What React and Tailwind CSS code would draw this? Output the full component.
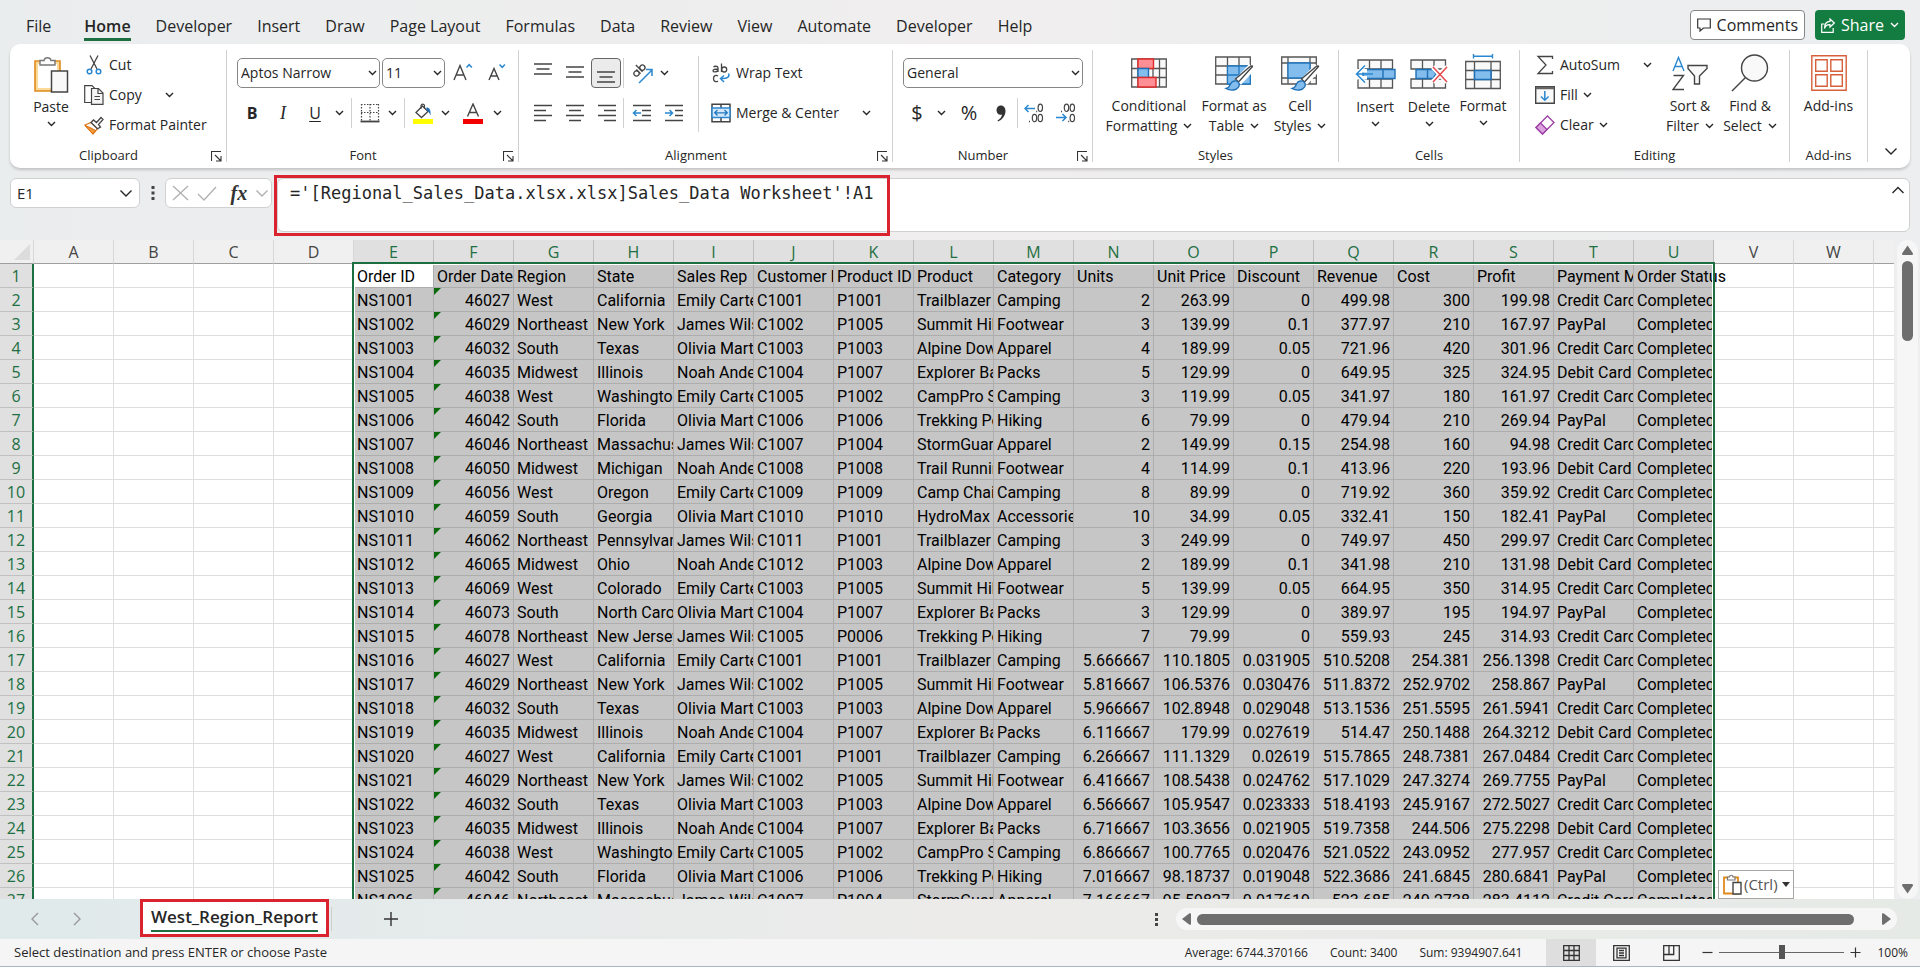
import clsx from 'clsx';

const tabs = [
  'File',
  'Home',
  'Developer',
  'Insert',
  'Draw',
  'Page Layout',
  'Formulas',
  'Data',
  'Review',
  'View',
  'Automate',
  'Developer',
  'Help',
];

const columns = 'ABCDEFGHIJKLMNOPQRSTUVW'.split('');
const FIRST = 4; // column E
const LAST = 20; // column U

const headings = [
  'Order ID', 'Order Date', 'Region', 'State', 'Sales Rep', 'Customer ID', 'Product ID', 'Product', 'Category',
  'Units', 'Unit Price', 'Discount', 'Revenue', 'Cost', 'Profit', 'Payment Method', 'Order Status',
];

const EC = 'Emily Carter';
const JW = 'James Wilson';
const OM = 'Olivia Martinez';
const NA = 'Noah Anderson';

const orders = [
  ['46027', 'West', 'California', EC, 'C1001', 'P1001', 'Trailblazer Tent', 'Camping', '2', '263.99', '0', '499.98', '300', '199.98', 'Credit Card'],
  ['46029', 'Northeast', 'New York', JW, 'C1002', 'P1005', 'Summit Hiking Boots', 'Footwear', '3', '139.99', '0.1', '377.97', '210', '167.97', 'PayPal'],
  ['46032', 'South', 'Texas', OM, 'C1003', 'P1003', 'Alpine Down Jacket', 'Apparel', '4', '189.99', '0.05', '721.96', '420', '301.96', 'Credit Card'],
  ['46035', 'Midwest', 'Illinois', NA, 'C1004', 'P1007', 'Explorer Backpack', 'Packs', '5', '129.99', '0', '649.95', '325', '324.95', 'Debit Card'],
  ['46038', 'West', 'Washington', EC, 'C1005', 'P1002', 'CampPro Stove', 'Camping', '3', '119.99', '0.05', '341.97', '180', '161.97', 'Credit Card'],
  ['46042', 'South', 'Florida', OM, 'C1006', 'P1006', 'Trekking Poles', 'Hiking', '6', '79.99', '0', '479.94', '210', '269.94', 'PayPal'],
  ['46046', 'Northeast', 'Massachusetts', JW, 'C1007', 'P1004', 'StormGuard Jacket', 'Apparel', '2', '149.99', '0.15', '254.98', '160', '94.98', 'Credit Card'],
  ['46050', 'Midwest', 'Michigan', NA, 'C1008', 'P1008', 'Trail Running Shoes', 'Footwear', '4', '114.99', '0.1', '413.96', '220', '193.96', 'Debit Card'],
  ['46056', 'West', 'Oregon', EC, 'C1009', 'P1009', 'Camp Chair', 'Camping', '8', '89.99', '0', '719.92', '360', '359.92', 'Credit Card'],
  ['46059', 'South', 'Georgia', OM, 'C1010', 'P1010', 'HydroMax Water Bottle', 'Accessories', '10', '34.99', '0.05', '332.41', '150', '182.41', 'PayPal'],
  ['46062', 'Northeast', 'Pennsylvania', JW, 'C1011', 'P1001', 'Trailblazer Tent', 'Camping', '3', '249.99', '0', '749.97', '450', '299.97', 'Credit Card'],
  ['46065', 'Midwest', 'Ohio', NA, 'C1012', 'P1003', 'Alpine Down Jacket', 'Apparel', '2', '189.99', '0.1', '341.98', '210', '131.98', 'Debit Card'],
  ['46069', 'West', 'Colorado', EC, 'C1003', 'P1005', 'Summit Hiking Boots', 'Footwear', '5', '139.99', '0.05', '664.95', '350', '314.95', 'Credit Card'],
  ['46073', 'South', 'North Carolina', OM, 'C1004', 'P1007', 'Explorer Backpack', 'Packs', '3', '129.99', '0', '389.97', '195', '194.97', 'PayPal'],
  ['46078', 'Northeast', 'New Jersey', JW, 'C1005', 'P0006', 'Trekking Poles', 'Hiking', '7', '79.99', '0', '559.93', '245', '314.93', 'Credit Card'],
  ['46027', 'West', 'California', EC, 'C1001', 'P1001', 'Trailblazer Tent', 'Camping', '5.666667', '110.1805', '0.031905', '510.5208', '254.381', '256.1398', 'Credit Card'],
  ['46029', 'Northeast', 'New York', JW, 'C1002', 'P1005', 'Summit Hiking Boots', 'Footwear', '5.816667', '106.5376', '0.030476', '511.8372', '252.9702', '258.867', 'PayPal'],
  ['46032', 'South', 'Texas', OM, 'C1003', 'P1003', 'Alpine Down Jacket', 'Apparel', '5.966667', '102.8948', '0.029048', '513.1536', '251.5595', '261.5941', 'Credit Card'],
  ['46035', 'Midwest', 'Illinois', NA, 'C1004', 'P1007', 'Explorer Backpack', 'Packs', '6.116667', '179.99', '0.027619', '514.47', '250.1488', '264.3212', 'Debit Card'],
  ['46027', 'West', 'California', EC, 'C1001', 'P1001', 'Trailblazer Tent', 'Camping', '6.266667', '111.1329', '0.02619', '515.7865', '248.7381', '267.0484', 'Credit Card'],
  ['46029', 'Northeast', 'New York', JW, 'C1002', 'P1005', 'Summit Hiking Boots', 'Footwear', '6.416667', '108.5438', '0.024762', '517.1029', '247.3274', '269.7755', 'PayPal'],
  ['46032', 'South', 'Texas', OM, 'C1003', 'P1003', 'Alpine Down Jacket', 'Apparel', '6.566667', '105.9547', '0.023333', '518.4193', '245.9167', '272.5027', 'Credit Card'],
  ['46035', 'Midwest', 'Illinois', NA, 'C1004', 'P1007', 'Explorer Backpack', 'Packs', '6.716667', '103.3656', '0.021905', '519.7358', '244.506', '275.2298', 'Debit Card'],
  ['46038', 'West', 'Washington', EC, 'C1005', 'P1002', 'CampPro Stove', 'Camping', '6.866667', '100.7765', '0.020476', '521.0522', '243.0952', '277.957', 'Credit Card'],
  ['46042', 'South', 'Florida', OM, 'C1006', 'P1006', 'Trekking Poles', 'Hiking', '7.016667', '98.18737', '0.019048', '522.3686', '241.6845', '280.6841', 'PayPal'],
  ['46046', 'Northeast', 'Massachusetts', JW, 'C1007', 'P1004', 'StormGuard Jacket', 'Apparel', '7.166667', '95.59827', '0.017619', '523.685', '240.2738', '283.4112', 'Credit Card'],
];

const rows = [headings, ...orders.map((order, i) => [`NS${1001 + i}`, ...order, 'Completed'])];

/* ---------- small shared pieces ---------- */

function Chevron({ className }) {
  return (
    <svg width="9" height="6" viewBox="0 0 9 6" fill="none" stroke="currentColor" strokeWidth="1.4" className={clsx('shrink-0', className)}>
      <path d="M1 1l3.5 3.5L8 1" />
    </svg>
  );
}

function WideChevron({ d, className }) {
  return (
    <svg width="14" height="14" viewBox="0 0 14 14" fill="none" stroke="currentColor" strokeWidth="1.4" className={clsx('shrink-0', className)}>
      <path d={d} />
    </svg>
  );
}

function Separator({ className }) {
  return <span className={clsx('w-px shrink-0 self-stretch bg-[#d1d1d1]', className)} />;
}

function IconButton({ label, className, children }) {
  return (
    <button type="button" aria-label={label} className={clsx('flex h-[30px] shrink-0 items-center justify-center rounded', className)}>
      {children}
    </button>
  );
}

function Drop({ label, className = 'w-4' }) {
  return (
    <IconButton label={label} className={className}>
      <Chevron />
    </IconButton>
  );
}

function SelectBox({ label, value, className }) {
  return (
    <span className={clsx('relative block h-[30px]', className)}>
      <select
        aria-label={label}
        defaultValue={value}
        className="h-full w-full appearance-none rounded-[5px] border border-[#868686] bg-white pl-[3px] text-sm outline-none"
      >
        <option>{value}</option>
      </select>
      <Chevron className="pointer-events-none absolute right-[3px] top-3" />
    </span>
  );
}

function Group({ title, launcher = false, className, children }) {
  return (
    <section aria-label={title} className={clsx('flex shrink-0', className)}>
      <div className="flex min-w-0 flex-1 flex-col pt-1.5">
        <div className="flex h-[90px]">{children}</div>
        <div className="mt-1 flex h-6 items-center px-1 text-[13px]">
          <span className={clsx('flex-1 text-center', launcher && 'pr-2')}>{title}</span>
          {launcher && (
            <button type="button" aria-label={`${title} settings`}>
              <svg width="11" height="11" viewBox="0 0 11 11" fill="none" stroke="#333" strokeWidth="1.1">
                <path d="M0.5 10V0.5H10M4 4l5.5 5.5M10 5v5H5" />
              </svg>
            </button>
          )}
        </div>
      </div>
      <Separator className="my-1.5" />
    </section>
  );
}

function BigButton({ icon, lines, dropBelow = false, drop = true, className }) {
  return (
    <button type="button" className={clsx('flex shrink-0 flex-col items-center self-start text-sm leading-5', className)}>
      <span className="flex h-[46px] items-center justify-center">{icon}</span>
      {lines.map((line, i) => (
        <span key={line} className="flex items-center gap-1.5 whitespace-nowrap">
          {line}
          {drop && !dropBelow && i === lines.length - 1 && <Chevron />}
        </span>
      ))}
      {dropBelow && <Chevron className="mt-1" />}
    </button>
  );
}

/* ---------- ribbon icons ---------- */

function PasteIcon() {
  return (
    <svg width="36" height="39" viewBox="0 0 36 39" fill="none">
      <path d="M2 6h25v30H2z" fill="#fbd998" stroke="#e08a1e" strokeWidth="1.6" />
      <path d="M5 9h19v24H5z" fill="#fff" />
      <path d="M7 10V5.5h4a3.600 3.600 0 0 1 7 0h4V10z" fill="#fff" stroke="#777" strokeWidth="1.4" />
      <path d="M18.5 16h16v21h-16z" fill="#f8f8f8" stroke="#444" strokeWidth="1.5" />
    </svg>
  );
}

function CutIcon() {
  return (
    <svg width="20" height="20" viewBox="0 0 20 20" fill="none">
      <path d="M6 0.5l7 13.5M14 0.5L7 14" stroke="#444" strokeWidth="1.3" />
      <circle cx="5.5" cy="16.5" r="2.3" stroke="#2b88d0" strokeWidth="1.5" />
      <circle cx="14.5" cy="16.5" r="2.3" stroke="#2b88d0" strokeWidth="1.5" />
    </svg>
  );
}

function CopyIcon() {
  return (
    <svg width="20" height="20" viewBox="0 0 20 20" fill="none" stroke="#444" strokeWidth="1.2">
      <path d="M7.5 17.5H0.7V0.7H8l3 3" fill="#fff" />
      <path d="M7.5 3.5h7l4.5 4.5v11.3H7.5z" fill="#f4f4f4" />
      <path d="M14 3.5V8.5h5M10.5 11.5h5.5M10.5 14.5h5.5" />
    </svg>
  );
}

function PainterIcon() {
  return (
    <svg width="20" height="19" viewBox="0 0 20 19" fill="none">
      <path d="M1 9l6-2.5 6.5 6L9 18z" fill="#fff" stroke="#e07b1a" strokeWidth="1.3" />
      <path d="M1 9.5l5 2 5.5 3L9 18z" fill="#f39a3b" stroke="#d9700f" />
      <path d="M7 6.5L9.5 4l3 2.5L17 1.5l2 2-4.5 5 2 2.5-3 1.7z" fill="#fff" stroke="#444" strokeWidth="1.3" />
    </svg>
  );
}

function FontSizeIcon({ grow }) {
  return (
    <svg width={grow ? 20 : 18} height="20" viewBox={grow ? '0 0 20 20' : '0 0 18 20'} fill="none">
      <path d={grow ? 'M1 17L7 2.5 13 17M3 12h8' : 'M1 17L6 5.500 11 17M2.800 13h6.500'} stroke="#444" strokeWidth="1.4" />
      <path d={grow ? 'M13.5 4.500l2.700-2.800 2.700 2.800' : 'M11.5 1.500l2.700 2.800 2.700-2.800'} stroke="#2b88d0" strokeWidth="1.5" />
    </svg>
  );
}

function BordersIcon() {
  return (
    <svg width="20" height="20" viewBox="0 0 20 20" fill="none" stroke="#444">
      <path d="M1 1.5h18M1 9.5h18M1.5 1v17M10 1v17M18.5 1v17" strokeDasharray="1.5 1.5" strokeWidth="1.2" />
      <path d="M0.5 18.5h19" strokeWidth="1.8" />
    </svg>
  );
}

function FillColorIcon() {
  return (
    <svg width="20" height="21" viewBox="0 0 20 21" fill="none">
      <path d="M3 9.5L9.5 3l5.5 5.5-6.5 6z" fill="#fff" stroke="#444" strokeWidth="1.3" />
      <path d="M8 6V2.5a1.800 1.800 0 0 1 3.500 0V6" stroke="#444" strokeWidth="1.1" />
      <path d="M13.5 4.5c3 0 4.500 2.500 4 8-1-2.500-2-4-4-5z" fill="#1f6fb5" />
      <path d="M0 16h20v5H0z" fill="#ffff00" />
    </svg>
  );
}

function FontColorIcon() {
  return (
    <svg width="20" height="21" viewBox="0 0 20 21" fill="none">
      <path d="M4.5 13.5L10 1l5.5 12.5M6.5 9.5h7" stroke="#444" strokeWidth="1.4" />
      <path d="M0 16h20v5H0z" fill="#f20000" />
    </svg>
  );
}

function Lines({ d, children }) {
  return (
    <svg width="20" height="20" viewBox="0 0 20 20" fill="none" stroke="#444" strokeWidth="1.5">
      <path d={d} />
      {children}
    </svg>
  );
}

function OrientationIcon() {
  return (
    <svg width="21" height="21" viewBox="0 0 21 21" fill="none" strokeWidth="1.3">
      <g stroke="#444" transform="rotate(-45 7 8)">
        <circle cx="3.5" cy="8" r="2.6" />
        <path d="M6.3 5v6M9 1.5V11" />
        <circle cx="11.8" cy="8" r="2.6" />
      </g>
      <path d="M7 20L20 7M14 6.5h6V13" stroke="#2b88d0" strokeWidth="1.5" />
    </svg>
  );
}

function WrapIcon() {
  return (
    <svg width="20" height="20" viewBox="0 0 20 20" fill="none" stroke="#444" strokeWidth="1.3">
      <path d="M2.5 4c1-1 4.500-1.300 4.500 1v4M7 6C4 6 2 6.200 2 7.700S5.500 9.500 7 7.500" />
      <path d="M10.5 0.5V9" />
      <circle cx="13.2" cy="6.5" r="2.5" />
      <path d="M7 13c-2-1.500-4.500-.5-4.500 2.500s2.500 4 4.500 2.500" />
      <path d="M17.5 10.5c1.500 3-1 5.500-7.500 5M13 12.5l-3.500 3 3.500 3.500" stroke="#2b88d0" strokeWidth="1.5" />
    </svg>
  );
}

function MergeIcon() {
  return (
    <svg width="20" height="20" viewBox="0 0 20 20" fill="none">
      <path d="M1 1.2h18v17.6H1zM10 1v4M10 15v4" stroke="#444" strokeWidth="1.5" />
      <path d="M1 5h18v9.5H1z" fill="#d4e8f9" stroke="#2b88d0" strokeWidth="1.5" />
      <path d="M4 9.8h12M6.5 7L3.7 9.8l2.8 2.7M13.5 7l2.8 2.8-2.8 2.7" stroke="#1f78c1" strokeWidth="1.3" />
    </svg>
  );
}

function DecimalIcon({ increase }) {
  return (
    <svg width="20" height="20" viewBox="0 0 20 20" fill="none" stroke="#444" strokeWidth="1.2">
      {increase ? (
        <>
          <path d="M11 5.5H1M4.5 2L1 5.5 4.5 9" stroke="#2b88d0" strokeWidth="1.5" />
          <ellipse cx="16.3" cy="4.8" rx="2.2" ry="3.7" />
          <ellipse cx="10.5" cy="15" rx="2.2" ry="3.7" />
          <ellipse cx="16.3" cy="15" rx="2.2" ry="3.7" />
          <path d="M12.2 8.500h1M5 18.500h1" strokeWidth="1.5" />
        </>
      ) : (
        <>
          <ellipse cx="10.5" cy="4.8" rx="2.2" ry="3.7" />
          <ellipse cx="16.3" cy="4.8" rx="2.2" ry="3.7" />
          <ellipse cx="16.3" cy="15" rx="2.2" ry="3.7" />
          <path d="M5 8.500h1M12.200 18.500h1" strokeWidth="1.5" />
          <path d="M0 14.5h10M6.5 11l3.5 3.5L6.5 18" stroke="#2b88d0" strokeWidth="1.5" />
        </>
      )}
    </svg>
  );
}

function ConditionalIcon() {
  return (
    <svg width="36" height="30" viewBox="0 0 36 30" fill="none">
      <path d="M0.7 1h34.6v28H0.7zM0.7 10.5h34.6M0.7 19.5h34.6M7 1v28M22 1v28M28.5 1v28" fill="#f9f9f9" stroke="#555" strokeWidth="1.3" />
      <path d="M7 1h15.5v9.5H7z" fill="#ff8f94" stroke="#e02b2b" strokeWidth="1.4" />
      <path d="M7 10.5h10.5v9H7z" fill="#83bdee" stroke="#1f6fb5" strokeWidth="1.4" />
      <path d="M7 19.5h18V29H7z" fill="#ff8f94" stroke="#e02b2b" strokeWidth="1.4" />
    </svg>
  );
}

function Brush() {
  return (
    <>
      <path d="M37 11L23 26" stroke="#fff" strokeWidth="8" />
      <path d="M37.5 10.500L23.500 26l-3-3L34.500 11c1.800-1.400 3.500-1.500 3-.5z" fill="#fff" stroke="#444" strokeWidth="1.3" />
      <path d="M11 32.5c3-.5 3.500-2 4.500-4.500 1.500-3.500 6-4 8-1.500 2 3-.5 7-5 7.500-3 .3-5.500-.3-7.500-1.500z" fill="#83bdee" stroke="#1f6fb5" strokeWidth="1.3" />
    </>
  );
}

function FormatTableIcon() {
  return (
    <svg width="39" height="36" viewBox="0 -1 39 36" fill="none">
      <path d="M0.7 1h34.6v27H0.7zM0.7 10h34.6M0.7 19h34.6M12.5 1v27M24 1v27" fill="#f9f9f9" stroke="#555" strokeWidth="1.3" />
      <path d="M12.5 10h22.8v18H12.5zM12.5 19h22.8M24 10v18" fill="#83bdee" stroke="#1f78c1" strokeWidth="1.3" />
      <Brush />
    </svg>
  );
}

function CellStylesIcon() {
  return (
    <svg width="39" height="36" viewBox="0 -1 39 36" fill="none">
      <path d="M0.7 1h34.6v27H0.7zM0.7 7h34.6M0.7 22h34.6M7 1v27M29 1v27" fill="#f9f9f9" stroke="#555" strokeWidth="1.3" />
      <path d="M7 7h22v15H7z" fill="#83bdee" stroke="#1f78c1" strokeWidth="1.3" />
      <Brush />
    </svg>
  );
}

function InsertCellsIcon() {
  return (
    <svg width="41" height="30" viewBox="0 0 41 30" fill="none">
      <path d="M3 1h34.5v9H3zM3 20h34.5v9H3zM14.5 1v9M26 1v9M14.5 20v9M26 20v9" fill="#f9f9f9" stroke="#555" strokeWidth="1.3" />
      <path d="M17 15H1.5M10 6.5L1.5 15l8.5 8.5" stroke="#fff" strokeWidth="4" />
      <path d="M8 10.5h32v9H8zM28 10.5v9" fill="#83bdee" stroke="#1f6fb5" strokeWidth="1.4" />
      <path d="M0 10h12v3.500H0zM0 17h12v3.500H0z" fill="#fff" />
      <path d="M18 15H1.5M10 6.5L1.5 15l8.500 8.500" stroke="#2b88d0" strokeWidth="1.5" />
    </svg>
  );
}

function DeleteCellsIcon() {
  return (
    <svg width="38" height="30" viewBox="0 0 38 30" fill="none">
      <path d="M1 1h34.5v9H1zM1 20h34.5v9H1zM12.5 1v9M24 1v9M12.5 20v9M24 20v9" fill="#f9f9f9" stroke="#555" strokeWidth="1.3" />
      <path d="M6 10.5h17l3 4.500-3 4.500H6zM17.500 10.500v9" fill="#83bdee" stroke="#1f6fb5" strokeWidth="1.4" />
      <path d="M23 8l14 15M37 8L23 23" stroke="#fff" strokeWidth="5" />
      <path d="M23 8l14 15M37 8L23 23" stroke="#e8484a" strokeWidth="1.5" />
    </svg>
  );
}

function FormatCellsIcon() {
  return (
    <svg width="36" height="38" viewBox="0 0 36 38" fill="none">
      <path d="M8.5 0v4.500M27.500 0v4.500M8.500 2.300h19" stroke="#2b88d0" strokeWidth="1.4" />
      <path d="M0.7 7.5h34.600v27H0.700zM0.700 16.500h34.600M0.700 25.500h34.600M9.500 7.500v27M26 7.500v27" fill="#f9f9f9" stroke="#555" strokeWidth="1.3" />
      <path d="M9.5 16.500H26v9H9.500z" fill="#83bdee" stroke="#1f6fb5" strokeWidth="1.5" />
    </svg>
  );
}

function SumIcon() {
  return (
    <svg width="20" height="20" viewBox="0 0 20 20" fill="none" stroke="#444" strokeWidth="1.3">
      <path d="M17.5 4V1.5H3L11 10l-8 8.5h14.500V16" />
    </svg>
  );
}

function FillIcon() {
  return (
    <svg width="20" height="18" viewBox="0 0 20 18" fill="none">
      <path d="M0.7 0.7h18.600v16.600H0.700z" fill="#f9f9f9" stroke="#444" strokeWidth="1.4" />
      <path d="M0.7 2h18.600" stroke="#666" strokeWidth="2.5" />
      <path d="M9.8 5v9M6 10.5l3.800 3.800 3.800-3.800" stroke="#2b88d0" strokeWidth="1.5" />
    </svg>
  );
}

function EraserIcon() {
  return (
    <svg width="20" height="20" viewBox="0 0 20 20" fill="none" stroke="#9b3fa5" strokeWidth="1.3">
      <path d="M12.5 1L19 7.500 7.500 19 1 12.500z" fill="#fff" />
      <path d="M5.5 8L12 14.500 7.500 19 1 12.500z" fill="#dba2df" />
    </svg>
  );
}

function SortIcon() {
  return (
    <svg width="36" height="35" viewBox="0 0 36 35" fill="none">
      <path d="M1 15L6.5 1.5 12 15M3 10.5h7" stroke="#2b88d0" strokeWidth="1.4" />
      <path d="M1.5 19.5h10L1 33.5h11" stroke="#444" strokeWidth="1.4" />
      <path d="M16 9.5h19v3L27.500 20v8h-5v-8L16 12.500z" fill="#f9f9f9" stroke="#444" strokeWidth="1.4" />
    </svg>
  );
}

function FindIcon() {
  return (
    <svg width="38" height="38" viewBox="0 0 38 38" fill="none" stroke="#444" strokeWidth="1.4">
      <circle cx="23.5" cy="14" r="13" fill="#f9f9f9" />
      <path d="M14.5 23.5L1 37" />
    </svg>
  );
}

function AddInsIcon() {
  return (
    <svg width="36" height="36" viewBox="0 0 36 36" fill="none" stroke="#d5603a" strokeWidth="1.4">
      <path d="M0.8 0.8h34.400v34.400H0.800z" />
      <path d="M4.7 4.7h11.500v11.500H4.700zM19.800 4.700h11.500v11.500H19.800zM4.700 19.800h11.500v11.500H4.700zM19.800 19.800h11.500v11.500H19.800z" />
    </svg>
  );
}

/* ---------- page sections ---------- */

function TabBar() {
  return (
    <header className="flex h-11 shrink-0 items-start justify-between pl-[26px] pr-[15px]">
      <nav aria-label="Ribbon tabs" className="mt-3.5 flex gap-[25px] text-base">
        {tabs.map((tab, i) => (
          <button
            key={i}
            type="button"
            className={clsx(
              'border-b-[3px] leading-6',
              tab === 'File' && 'mr-2',
              tab === 'Home' ? 'border-[#1d6f42] font-semibold' : 'border-transparent',
            )}
          >
            {tab}
          </button>
        ))}
      </nav>
      <div className="mt-2.5 flex gap-2.5 text-base">
        <button type="button" className="flex h-[30px] items-center gap-1.5 rounded border border-[#868686] bg-white px-1.5">
          <svg width="14" height="14" viewBox="0 0 14 14" fill="none" stroke="#333" strokeWidth="1.2">
            <path d="M0.7 1h12.600v9H6.500L3 13v-3H0.700z" />
          </svg>
          Comments
        </button>
        <button type="button" className="flex h-[30px] items-center gap-1.5 rounded bg-[#127c41] px-1.5 text-white">
          <svg width="14" height="15" viewBox="0 0 14 15" fill="none" stroke="#fff" strokeWidth="1.2">
            <path d="M3.5 6H0.700v8.300h11.500V10M9 1l4.300 4L9 9V6.700C6 6.500 4.300 8 3.500 10.500 3.500 6.500 5.500 3.600 9 3.400z" />
          </svg>
          Share
          <Chevron />
        </button>
      </div>
    </header>
  );
}

function Ribbon() {
  return (
    <div className="mx-2.5 flex h-[124px] shrink-0 rounded-[10px] bg-white shadow-[0_2px_3px_rgba(0,0,0,0.18)]">
      <Group title="Clipboard" launcher className="w-[217px]">
        <BigButton icon={<PasteIcon />} lines={['Paste']} dropBelow className="ml-4 w-[50px] pt-px" />
        <div className="ml-2 flex flex-col text-sm">
          <button type="button" className="flex h-8 items-center gap-[5px]">
            <CutIcon />
            Cut
          </button>
          <div className="flex h-8 items-center">
            <button type="button" className="flex items-center gap-[5px]">
              <CopyIcon />
              Copy
            </button>
            <Drop label="Copy options" className="ml-5 w-4" />
          </div>
          <button type="button" className="flex h-8 items-center gap-[5px] whitespace-nowrap">
            <PainterIcon />
            Format Painter
          </button>
        </div>
      </Group>

      <Group title="Font" launcher className="w-[292px]">
        <div className="ml-2.5 flex flex-col gap-2.5 pt-2">
          <div className="flex gap-0.5">
            <SelectBox label="Font name" value="Aptos Narrow" className="w-[143px]" />
            <SelectBox label="Font size" value="11" className="w-[63px]" />
            <IconButton label="Increase font size" className="w-8">
              <FontSizeIcon grow />
            </IconButton>
            <IconButton label="Decrease font size" className="w-8">
              <FontSizeIcon />
            </IconButton>
          </div>
          <div className="flex">
            <IconButton label="Bold" className="w-[30px]">
              <b className="text-base">B</b>
            </IconButton>
            <IconButton label="Italic" className="w-8">
              <i className="font-['Liberation_Serif',serif] text-lg">I</i>
            </IconButton>
            <IconButton label="Underline" className="w-8">
              <u className="text-base underline-offset-2">U</u>
            </IconButton>
            <Drop label="Underline options" />
            <Separator className="mx-1" />
            <IconButton label="Borders" className="w-7">
              <BordersIcon />
            </IconButton>
            <Drop label="Border options" />
            <Separator className="mx-1" />
            <IconButton label="Fill color" className="w-7">
              <FillColorIcon />
            </IconButton>
            <Drop label="Fill color options" />
            <IconButton label="Font color" className="ml-1 w-8">
              <FontColorIcon />
            </IconButton>
            <Drop label="Font color options" />
          </div>
        </div>
      </Group>

      <Group title="Alignment" launcher className="w-[374px]">
        <div className="ml-2 flex flex-col gap-2.5 pt-2">
          <div className="flex">
            <IconButton label="Top align" className="w-8">
              <Lines d="M1 1h18M3.500 6h13M1 11h18" />
            </IconButton>
            <IconButton label="Middle align" className="w-8">
              <Lines d="M1 4h18M3.500 9h13M1 14h18" />
            </IconButton>
            <IconButton label="Bottom align" className="w-[30px] border border-[#666] bg-[#ebebeb]">
              <Lines d="M1 9h18M3.500 14h13M1 19h18" />
            </IconButton>
            <Separator className="ml-0.5 mr-1" />
            <IconButton label="Orientation" className="w-7">
              <OrientationIcon />
            </IconButton>
            <Drop label="Orientation options" />
          </div>
          <div className="flex">
            <IconButton label="Align left" className="w-8">
              <Lines d="M1 2.500h18M1 7.500h12M1 12.500h18M1 17.500h12" />
            </IconButton>
            <IconButton label="Center" className="w-8">
              <Lines d="M1 2.500h18M4 7.500h12M1 12.500h18M4 17.500h12" />
            </IconButton>
            <IconButton label="Align right" className="w-8">
              <Lines d="M1 2.500h18M7 7.500h12M1 12.500h18M7 17.500h12" />
            </IconButton>
            <Separator className="mr-0.5" />
            <IconButton label="Decrease indent" className="w-8">
              <Lines d="M1 2.500h18M10 7.500h9M10 12.500h9M1 17.500h18">
                <path d="M9 10H1.500M4.500 7l-3 3 3 3" stroke="#2b88d0" />
              </Lines>
            </IconButton>
            <IconButton label="Increase indent" className="w-8">
              <Lines d="M1 2.500h18M11 7.500h8M11 12.500h8M1 17.500h18">
                <path d="M1 10h7.500M5.500 7l3 3-3 3" stroke="#2b88d0" />
              </Lines>
            </IconButton>
          </div>
        </div>
        <Separator className="mb-2 ml-2 mr-3 mt-1.5" />
        <div className="flex flex-col gap-2.5 pt-2 text-sm">
          <button type="button" className="flex h-[30px] items-center gap-[5px]">
            <WrapIcon />
            Wrap Text
          </button>
          <div className="flex">
            <button type="button" className="flex h-[30px] items-center gap-[5px] whitespace-nowrap">
              <MergeIcon />
              Merge &amp; Center
            </button>
            <Drop label="Merge options" className="ml-5 w-4" />
          </div>
        </div>
      </Group>

      <Group title="Number" launcher className="w-[200px]">
        <div className="ml-2.5 flex flex-col gap-2.5 pt-2">
          <SelectBox label="Number format" value="General" className="w-[180px]" />
          <div className="flex">
            <IconButton label="Accounting format" className="w-7 text-xl">
              $
            </IconButton>
            <Drop label="Accounting options" className="ml-0.5 w-4" />
            <IconButton label="Percent style" className="ml-1 w-8 text-xl">
              %
            </IconButton>
            <IconButton label="Comma style" className="w-8">
              <svg width="10" height="17" viewBox="0 0 10 17">
                <path d="M4.8 0.5C8 0.500 9.500 3 9.500 6c0 5-3.500 9-7.500 10.500l-.5-1C4 14 5.800 12 6 9.500 3 10.500 0.500 8.500 0.500 5.200 0.500 2.500 2.500 0.500 4.800 0.500z" fill="#333" />
              </svg>
            </IconButton>
            <Separator />
            <IconButton label="Increase decimal" className="w-8">
              <DecimalIcon increase />
            </IconButton>
            <IconButton label="Decrease decimal" className="w-8">
              <DecimalIcon />
            </IconButton>
          </div>
        </div>
      </Group>

      <Group title="Styles" className="w-[246px]">
        <BigButton icon={<ConditionalIcon />} lines={['Conditional', 'Formatting']} className="ml-2.5 w-[92px]" />
        <BigButton icon={<FormatTableIcon />} lines={['Format as', 'Table']} className="w-[78px]" />
        <BigButton icon={<CellStylesIcon />} lines={['Cell', 'Styles']} className="w-[54px]" />
      </Group>

      <Group title="Cells" className="w-[181px]">
        <BigButton icon={<InsertCellsIcon />} lines={['Insert']} dropBelow className="ml-2.5 w-[52px] pt-px" />
        <BigButton icon={<DeleteCellsIcon />} lines={['Delete']} dropBelow className="w-14 pt-px" />
        <BigButton icon={<FormatCellsIcon />} lines={['Format']} dropBelow className="w-[52px]" />
      </Group>

      <Group title="Editing" className="w-[270px]">
        <div className="ml-[15px] flex w-[126px] flex-col text-sm">
          <div className="flex h-8 items-center">
            <button type="button" className="flex items-center gap-[5px]">
              <SumIcon />
              AutoSum
            </button>
            <Drop label="AutoSum options" className="ml-auto mr-1.5 w-4" />
          </div>
          <button type="button" className="flex h-8 items-center gap-[5px]">
            <FillIcon />
            Fill
            <Chevron />
          </button>
          <button type="button" className="flex h-8 items-center gap-[5px]">
            <EraserIcon />
            Clear
            <Chevron />
          </button>
        </div>
        <BigButton icon={<SortIcon />} lines={['Sort &', 'Filter']} className="w-[58px]" />
        <BigButton icon={<FindIcon />} lines={['Find &', 'Select']} className="w-[62px]" />
      </Group>

      <Group title="Add-ins" className="w-[78px]">
        <BigButton icon={<AddInsIcon />} lines={['Add-ins']} drop={false} className="w-full" />
      </Group>

      <button type="button" aria-label="Collapse ribbon" className="mb-2.5 ml-auto mr-3 self-end">
        <WideChevron d="M1.5 4.500L7 10l5.500-5.500" />
      </button>
    </div>
  );
}

function FormulaBar() {
  return (
    <div className="relative mx-2.5 mb-2 mt-2.5 flex shrink-0 items-start">
      <div className="flex h-[30px] w-[130px] items-center rounded-md border border-[#d0d0d0] bg-white pr-1.5">
        <input aria-label="Name box" defaultValue="E1" className="min-w-0 flex-1 pl-1.5 text-[15px] outline-none" />
        <WideChevron d="M1.5 4.500L7 10l5.500-5.500" />
      </div>
      <svg width="4" height="14" viewBox="0 0 4 14" fill="#444" className="ml-[11px] mt-2">
        <path d="M0.5 0h3v3h-3zM0.500 5.500h3v3h-3zM0.500 11h3v3h-3z" />
      </svg>
      <div className="ml-[10px] flex h-[30px] w-[107px] items-center justify-between rounded-md border border-[#d0d0d0] bg-white pl-1.5 pr-0.5 text-[#b0b0b0]">
        <button type="button" aria-label="Cancel">
          <svg width="17" height="16" viewBox="0 0 17 16" fill="none" stroke="currentColor" strokeWidth="1.3">
            <path d="M1 1l15 14M16 1L1 15" />
          </svg>
        </button>
        <button type="button" aria-label="Enter">
          <svg width="20" height="15" viewBox="0 0 20 15" fill="none" stroke="currentColor" strokeWidth="1.3">
            <path d="M1 8l6 6L19 1" />
          </svg>
        </button>
        <button type="button" aria-label="Insert function" className="ml-1.5 font-['Liberation_Serif',serif] text-xl font-bold italic leading-none text-[#333]">
          fx
        </button>
        <WideChevron d="M1.5 4.500L7 10l5.500-5.500" />
      </div>
      <div className="ml-[5px] flex h-[54px] flex-1 rounded-md border border-[#d0d0d0] bg-white">
        <textarea
          aria-label="Formula bar"
          spellCheck={false}
          defaultValue="='[Regional_Sales_Data.xlsx.xlsx]Sales_Data Worksheet'!A1"
          className="h-full flex-1 resize-none py-1 pl-3 font-['DejaVu_Sans_Mono',monospace] text-[17px] leading-5 outline-none"
        />
        <button type="button" aria-label="Collapse formula bar" className="mr-1 mt-1 self-start">
          <WideChevron d="M1.5 10L7 4.500l5.500 5.500" />
        </button>
      </div>
      <div className="pointer-events-none absolute -bottom-1 -top-[3px] left-[264px] w-[616px] border-[3px] border-[#d9232e]" />
    </div>
  );
}

function Cell({ row, col }) {
  const value = rows[row][col - FIRST];
  const selected = col >= FIRST && col <= LAST;
  const active = row === 0 && col === FIRST;
  const numeric = row > 0 && value !== undefined && /^[\d.]+$/.test(value);
  const flagged = row > 0 && col === FIRST + 1;

  return (
    <td
      className={clsx(
        'h-6 border-b border-r p-0',
        !selected && 'border-[#dedede] bg-white',
        selected && 'border-[#adadad]',
        selected && (active ? 'bg-white' : 'bg-[#c6c6c6]'),
      )}
    >
      {selected && (
        <div
          className={clsx(
            'relative h-[23px] whitespace-nowrap px-[3px] leading-[25px]',
            numeric && 'text-right',
            !(row === 0 && col === LAST) && 'overflow-hidden',
          )}
        >
          {flagged && <span className="absolute left-0 top-0 border-r-[7px] border-t-[7px] border-r-transparent border-t-[#0b6a0b]" />}
          {value}
        </div>
      )}
    </td>
  );
}

function Sheet() {
  return (
    <main className="flex min-h-0 flex-1">
      <div className="relative min-w-0 flex-1 overflow-hidden bg-white">
        <table className="w-full table-fixed border-separate border-spacing-0 font-['Roboto','Open_Sans',sans-serif] text-base text-black">
          <colgroup>
            <col className="w-[34px]" />
            {columns.map((name) => (
              <col key={name} className="w-20" />
            ))}
            <col />
          </colgroup>
          <thead className="font-['Open_Sans','Noto_Sans',sans-serif]">
            <tr>
              <th aria-label="Select all" className="h-6 border-b border-r border-b-[#9f9f9f] border-r-[#d8d8d8] bg-[#f0f0f0] p-0">
                <svg width="16" height="16" viewBox="0 0 16 16" className="ml-auto mr-[3px]">
                  <path d="M16 0v16H0z" fill="#dcdcdc" />
                </svg>
              </th>
              {columns.map((name, i) => (
                <th
                  key={name}
                  scope="col"
                  className={clsx(
                    'h-6 border-b border-r border-b-[#9f9f9f] p-0 font-normal',
                    i >= FIRST && i <= LAST ? 'border-r-[#bdbdbd] bg-[#e0e0e0] text-[#1d6f42]' : 'border-r-[#d8d8d8] bg-[#f0f0f0] text-[#444]',
                  )}
                >
                  <div className="h-[23px] leading-[25px]">{name}</div>
                </th>
              ))}
              <th className="border-b border-b-[#9f9f9f] bg-[#f0f0f0] p-0" />
            </tr>
          </thead>
          <tbody>
            {rows.map((_, row) => (
              <tr key={row}>
                <th
                  scope="row"
                  className="h-6 border-b border-r-2 border-b-[#c0c0c0] border-r-[#1d6f42] bg-[#e0e0e0] p-0 font-['Open_Sans','Noto_Sans',sans-serif] font-normal text-[#1d6f42]"
                >
                  <div className="h-[23px] leading-[25px]">{row + 1}</div>
                </th>
                {columns.map((name, col) => (
                  <Cell key={name} row={row} col={col} />
                ))}
                <td className="border-b border-[#dedede] p-0" />
              </tr>
            ))}
          </tbody>
        </table>

        {/* selection outline around E:U */}
        <div className="pointer-events-none absolute -bottom-2 left-[352px] top-[22px] w-[1363px] border-2 border-[#1d6f42] shadow-[inset_0_0_0_1px_#fff]" />

        {/* paste options */}
        <button
          type="button"
          className="absolute bottom-0 left-[1718px] flex h-[29px] w-[76px] items-center gap-0.5 border border-[#a6a6a6] bg-white pl-1 text-[15px] text-[#555]"
        >
          <svg width="19" height="21" viewBox="0 0 19 21" fill="none" className="shrink-0">
            <path d="M1 3.5h14v16H1z" fill="#fff" stroke="#e08a1e" strokeWidth="1.8" />
            <path d="M4.5 6V3H6.500a1.700 1.700 0 0 1 3.500 0h2V6z" fill="#fff" stroke="#777" strokeWidth="1.2" />
            <path d="M10 8.5h8v11.500h-8z" fill="#fff" stroke="#444" strokeWidth="1.4" />
          </svg>
          (Ctrl)
          <svg width="8" height="5" viewBox="0 0 8 5" className="ml-0.5">
            <path d="M0 0h8L4 5z" fill="#333" />
          </svg>
        </button>
      </div>

      <div className="ml-[3px] mr-0.5 flex w-[21px] shrink-0 flex-col items-center rounded-[10px] bg-[#f6f6f6] py-[5px]">
        <svg width="11" height="10" viewBox="0 0 11 10" fill="#6e6e6e">
          <path d="M5.5 0.500L11 8.500c0 1-.5 1.500-1.500 1.500h-8C.5 10 0 9.500 0 8.500z" />
        </svg>
        <div className="mt-1.5 h-20 w-[11px] rounded-md bg-[#6e6e6e]" />
        <svg width="11" height="10" viewBox="0 0 11 10" fill="#6e6e6e" className="mt-auto">
          <path d="M5.5 9.500L11 1.500C11 .5 10.500 0 9.500 0h-8C.5 0 0 .5 0 1.500z" />
        </svg>
      </div>
    </main>
  );
}

function SheetTabs() {
  return (
    <div className="flex h-10 shrink-0 items-center bg-linear-to-r from-[#e0eaeb] via-[#ecebea] to-[#e6eae7] pr-[23px]">
      <button type="button" aria-label="Previous sheet" className="ml-7 text-[#999]">
        <WideChevron d="M10 1L4 7l6 6" />
      </button>
      <button type="button" aria-label="Next sheet" className="ml-7 text-[#999]">
        <WideChevron d="M4 1l6 6-6 6" />
      </button>
      <div className="ml-14 flex h-[38px] w-[189px] justify-center self-start border-[3px] border-[#d9232e] bg-white pt-0.5">
        <button type="button" className="self-start border-b-2 border-[#1d6f42] text-[17px] font-semibold leading-[26px]">
          West_Region_Report
        </button>
      </div>
      <span className="ml-0.5 h-6 w-px bg-[#cfcfcf]" />
      <button type="button" aria-label="New sheet" className="ml-[52px]">
        <svg width="14" height="14" viewBox="0 0 14 14" fill="none" stroke="#333" strokeWidth="1.4">
          <path d="M7 0v14M0 7h14" />
        </svg>
      </button>
      <svg width="3" height="13" viewBox="0 0 3 13" fill="#444" className="ml-auto">
        <path d="M0 0h3v3H0zM0 5h3v3H0zM0 10h3v3H0z" />
      </svg>
      <div className="ml-[18px] flex h-[22px] w-[721px] items-center rounded-[11px] bg-[#f6f6f6] px-1.5">
        <svg width="9" height="12" viewBox="0 0 9 12" fill="#6e6e6e">
          <path d="M0 6L7.5 0.300C8.500 0 9 .5 9 1.500v9c0 1-.5 1.500-1.500 1.200z" />
        </svg>
        <div className="ml-1.5 mr-7 h-[11px] flex-1 rounded-md bg-[#6e6e6e]" />
        <svg width="9" height="12" viewBox="0 0 9 12" fill="#6e6e6e">
          <path d="M9 6L1.5 0.300C.5 0 0 .5 0 1.500v9c0 1 .5 1.500 1.500 1.200z" />
        </svg>
      </div>
    </div>
  );
}

function StatusBar() {
  return (
    <footer className="flex h-7 shrink-0 items-center border-b border-[#a9b7c4] bg-[#f5f5f5] pl-3.5 pr-3 text-xs">
      <span className="text-[13px]">Select destination and press ENTER or choose Paste</span>
      <span className="ml-auto">Average: 6744.370166</span>
      <span className="ml-[22px]">Count: 3400</span>
      <span className="ml-[22px]">Sum: 9394907.641</span>
      <button type="button" aria-label="Normal view" className="ml-6 flex h-full w-[50px] items-center justify-center bg-[#dedede]">
        <svg width="17" height="16" viewBox="0 0 17 16" fill="none" stroke="#333" strokeWidth="1.3">
          <path d="M0.7 0.7h15.600v14.600H0.700zM0.700 5.500h15.600M0.700 10.500h15.600M6 0.700v14.600M11 0.700v14.600" />
        </svg>
      </button>
      <button type="button" aria-label="Page layout view" className="flex h-full w-[50px] items-center justify-center">
        <svg width="17" height="16" viewBox="0 0 17 16" fill="none" stroke="#333" strokeWidth="1.3">
          <path d="M0.7 0.7h15.600v14.600H0.700zM4 3.200h9v9.600H4zM6 5.500h5M6 8h5M6 10.500h5" />
        </svg>
      </button>
      <button type="button" aria-label="Page break preview" className="flex h-full w-[50px] items-center justify-center">
        <svg width="17" height="16" viewBox="0 0 17 16" fill="none" stroke="#333" strokeWidth="1.3">
          <path d="M0.7 0.7h15.600v14.600H0.700zM0.700 9.500h10V0.700M6 0.700v8.800" />
        </svg>
      </button>
      <button type="button" aria-label="Zoom out" className="ml-1.5">
        <svg width="11" height="11" viewBox="0 0 11 11" stroke="#333" strokeWidth="1.2">
          <path d="M0.5 5.500h10" />
        </svg>
      </button>
      <input
        type="range"
        aria-label="Zoom"
        min="0"
        max="200"
        defaultValue="100"
        className="mx-1.5 h-4 w-[125px] appearance-none bg-transparent [&::-webkit-slider-runnable-track]:h-px [&::-webkit-slider-runnable-track]:bg-[#666] [&::-webkit-slider-thumb]:-mt-[7px] [&::-webkit-slider-thumb]:h-3.5 [&::-webkit-slider-thumb]:w-[6px] [&::-webkit-slider-thumb]:appearance-none [&::-webkit-slider-thumb]:bg-[#555]"
      />
      <button type="button" aria-label="Zoom in">
        <svg width="11" height="11" viewBox="0 0 11 11" stroke="#333" strokeWidth="1.2">
          <path d="M0.5 5.500h10M5.500 0.500v10" />
        </svg>
      </button>
      <span className="ml-4">100%</span>
    </footer>
  );
}

export default function App() {
  return (
    <div className="flex h-screen flex-col overflow-hidden bg-linear-to-r from-[#eaedee] via-[#f0eeee] to-[#eceeef] font-['Open_Sans','Noto_Sans',sans-serif] text-[#262626]">
      <TabBar />
      <Ribbon />
      <FormulaBar />
      <Sheet />
      <SheetTabs />
      <StatusBar />
    </div>
  );
}
